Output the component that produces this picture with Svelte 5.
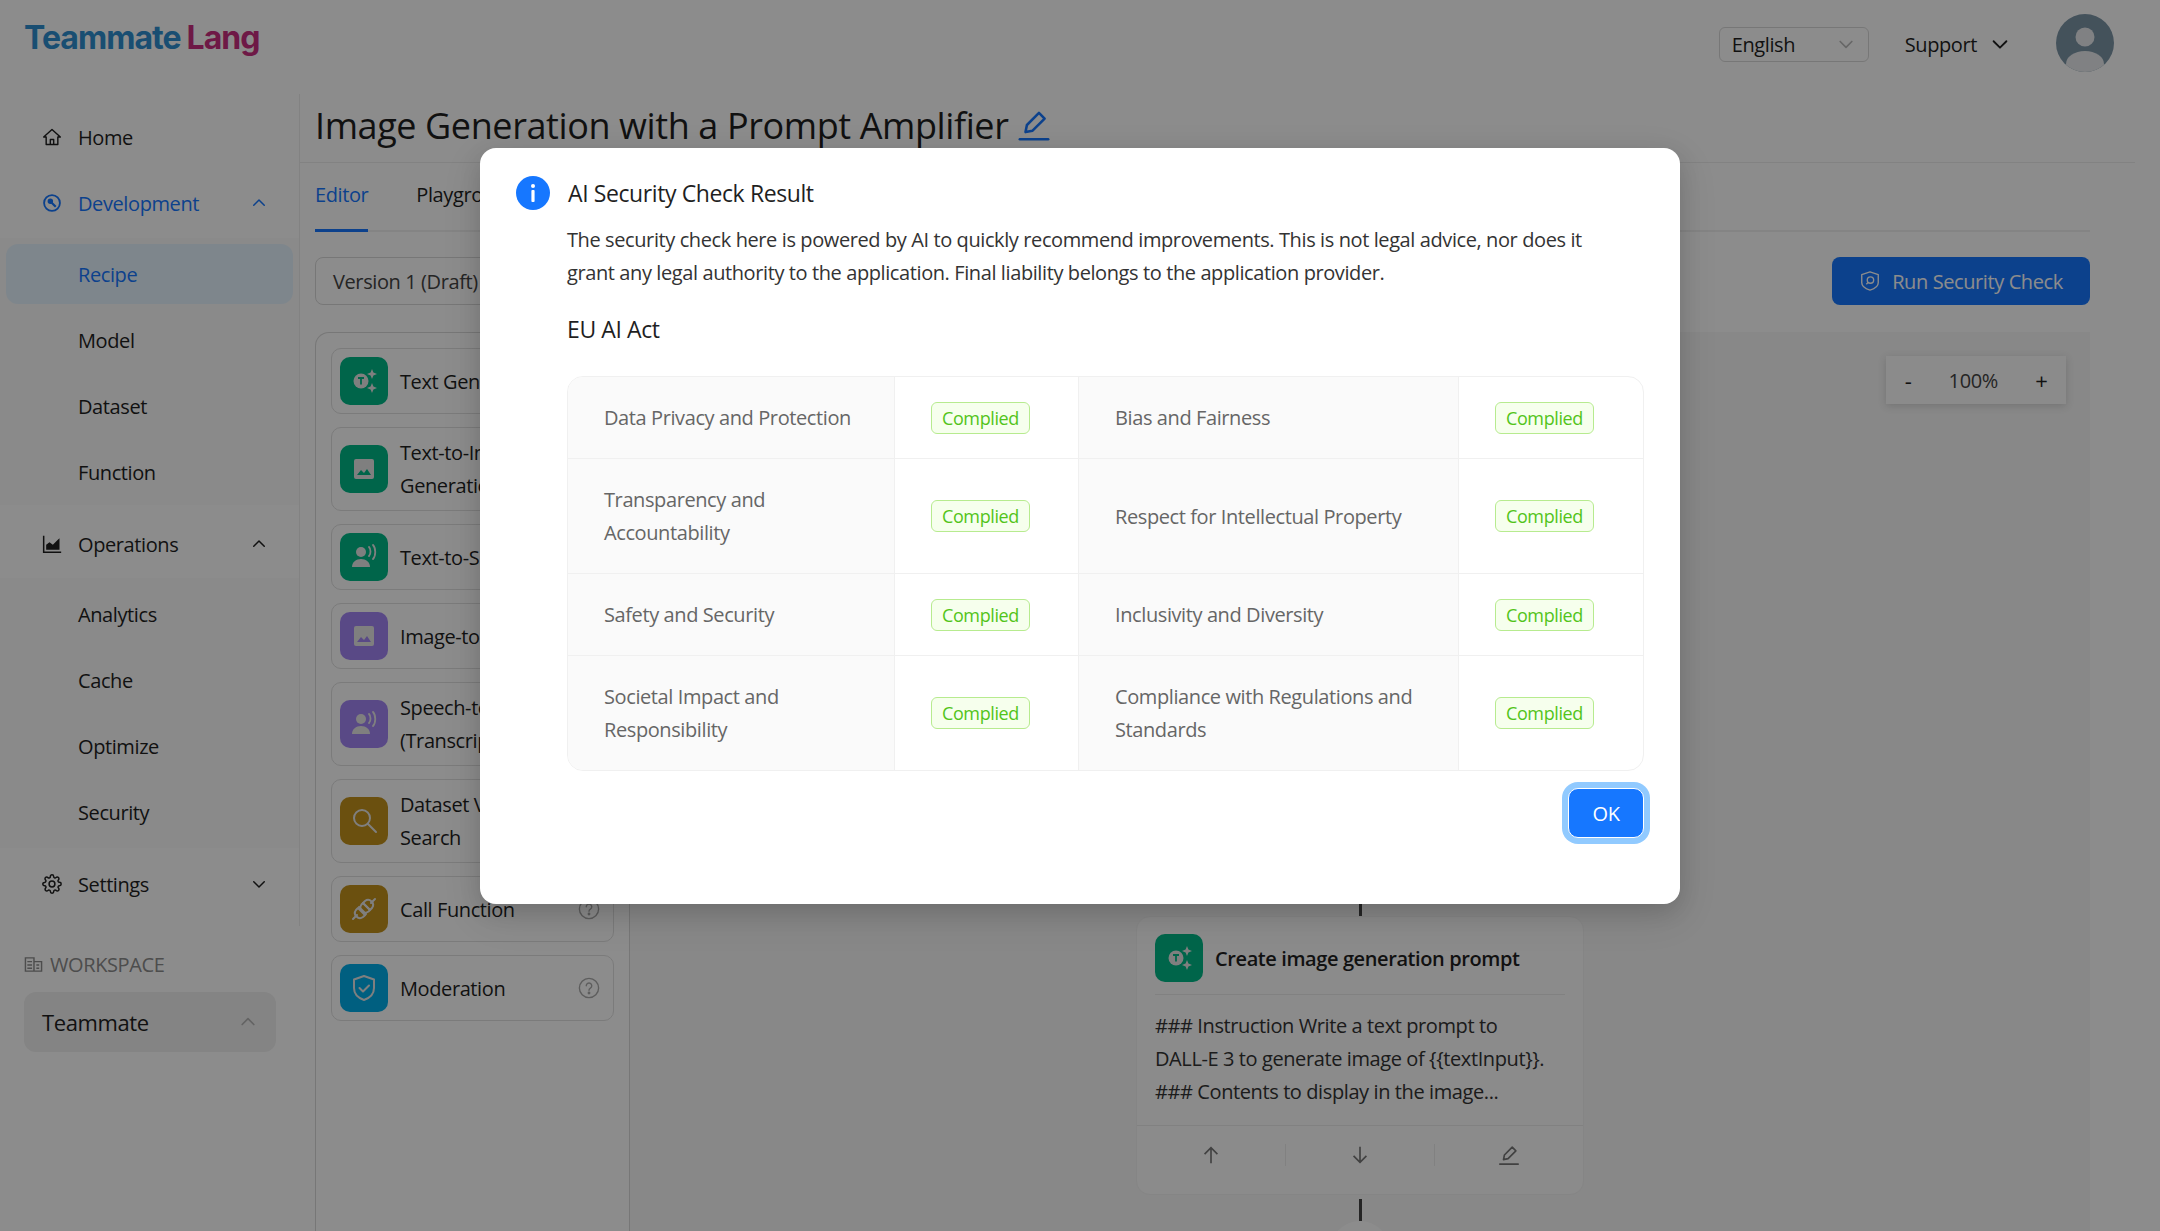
<script>
  const recipe = ['Recipe', 'Model', 'Dataset', 'Function'];
  const operations = ['Analytics', 'Cache', 'Optimize', 'Security'];

  const blocks = [
    { lines: ['Text Generation'], tone: 'green', icon: 'spark' },
    { lines: ['Text-to-Image', 'Generation'], tone: 'green', icon: 'image' },
    { lines: ['Text-to-Speech'], tone: 'green', icon: 'voice' },
    { lines: ['Image-to-Text'], tone: 'purple', icon: 'image' },
    { lines: ['Speech-to-Text', '(Transcription)'], tone: 'purple', icon: 'voice' },
    { lines: ['Dataset Vector', 'Search'], tone: 'amber', icon: 'search' },
    { lines: ['Call Function'], tone: 'amber', icon: 'plug' },
    { lines: ['Moderation'], tone: 'sky', icon: 'shield' }
  ];

  const checks = [
    ['Data Privacy and Protection', 'Bias and Fairness'],
    ['Transparency and Accountability', 'Respect for Intellectual Property'],
    ['Safety and Security', 'Inclusivity and Diversity'],
    ['Societal Impact and Responsibility', 'Compliance with Regulations and Standards']
  ];
</script>

{#snippet chevron(cls)}
  <svg class={cls} viewBox="0 0 24 24" fill="none" stroke="currentColor" stroke-width="2" stroke-linecap="round" stroke-linejoin="round"><path d="M5 9l7 7 7-7" /></svg>
{/snippet}

{#snippet pencil(cls)}
  <svg class={cls} viewBox="0 0 24 24" fill="none" stroke="currentColor" stroke-width="1.8" stroke-linejoin="round"><path d="M6 17l1-5L15.5 3.5l4 4L11 16z" /><path d="M2 22h20" stroke-linecap="round" /></svg>
{/snippet}

{#snippet blockIcon(name)}
  {#if name === 'spark'}
    <svg viewBox="0 0 32 32"><circle cx="13" cy="16" r="7.5" fill="#e8e8e8" /><path d="M10 13h6M13 13v6.5" stroke="currentColor" stroke-width="1.8" fill="none" /><path d="M24 4l1.4 3.6L29 9l-3.6 1.4L24 14l-1.4-3.6L19 9l3.6-1.4zM24 18l1.4 3.6L29 23l-3.6 1.4L24 28l-1.4-3.6L19 23l3.6-1.4z" fill="#e8e8e8" /></svg>
  {:else if name === 'image'}
    <svg viewBox="0 0 32 32"><rect x="6" y="6" width="20" height="20" rx="2" fill="#e8e8e8" /><path d="M9 22l4-5 3 3 3-4 4 6z" fill="currentColor" /></svg>
  {:else if name === 'voice'}
    <svg viewBox="0 0 32 32"><circle cx="13" cy="11" r="5" fill="#e8e8e8" /><path d="M4 26c0-5 4-8 9-8s9 3 9 8z" fill="#e8e8e8" /><path d="M21 6c2 2 2 7 0 9M25 4c3 3 3 11 0 14" stroke="#e8e8e8" stroke-width="1.8" fill="none" stroke-linecap="round" /></svg>
  {:else if name === 'search'}
    <svg viewBox="0 0 32 32" fill="none" stroke="#e8e8e8" stroke-width="2" stroke-linecap="round"><circle cx="14" cy="13" r="8" /><path d="M20 19l8 8" /></svg>
  {:else if name === 'plug'}
    <svg viewBox="0 0 32 32" fill="none" stroke="#e8e8e8" stroke-width="2" stroke-linecap="round" stroke-linejoin="round"><path d="M5 26l4-4M27 6l-4 4M15 10l7 7-1.5 1.5a5 5 0 0 1-7-7zM11 14l7 7-1.5 1.5" transform="rotate(0 16 16)" /><path d="M10 15l-2 2a5 5 0 0 0 7 7l2-2zM15 10l2-2a5 5 0 0 1 7 7l-2 2z" /></svg>
  {:else}
    <svg viewBox="0 0 32 32" fill="none" stroke="#e8e8e8" stroke-width="2" stroke-linecap="round" stroke-linejoin="round"><path d="M16 4l10 3.5V16c0 6-4.5 10-10 12-5.500-2-10-6-10-12V7.500z" /><path d="M11.500 16l3.500 3.500 6-6" /></svg>
  {/if}
{/snippet}

<div class="page">
  <header class="topbar">
    <div class="logo"><span class="logo-a">Teammate</span><span class="logo-b">Lang</span></div>
    <div class="top-actions">
      <div class="lang">
        <span>English</span>
        {@render chevron('lang-arrow')}
      </div>
      <div class="support">
        <span>Support</span>
        {@render chevron('support-arrow')}
      </div>
      <svg class="avatar" viewBox="0 0 58 58">
        <defs><clipPath id="av"><circle cx="29" cy="29" r="29" /></clipPath></defs>
        <g clip-path="url(#av)">
          <rect width="58" height="58" fill="#7c95a7" />
          <circle cx="29" cy="23" r="9.500" fill="#e9ecee" />
          <ellipse cx="29" cy="50" rx="19" ry="13" fill="#e9ecee" />
        </g>
      </svg>
    </div>
  </header>

  <div class="body">
    <aside class="side">
      <nav class="menu">
        <div class="item">
          <svg class="nav-icon" viewBox="0 0 24 24" fill="none" stroke="currentColor" stroke-width="1.7" stroke-linejoin="round"><path d="M2 12L12 3l10 9h-3v9H5v-9z" /><path d="M10 21v-6h4v6" /></svg>
          <span>Home</span>
        </div>
        <div class="item active">
          <svg class="nav-icon" viewBox="0 0 24 24" fill="none" stroke="currentColor" stroke-width="2.200"><circle cx="12" cy="12" r="9.500" /><circle cx="10" cy="10" r="2.200" fill="currentColor" /><path d="M11 11l5.500 5.500" stroke-width="2.600" /></svg>
          <span>Development</span>
          {@render chevron('caret up')}
        </div>
        <div class="sub first">
          {#each recipe as name, i}
            <div class="sub-item" class:selected={i === 0}>{name}</div>
          {/each}
        </div>
        <div class="item">
          <svg class="nav-icon" viewBox="0 0 24 24"><path d="M2 2v20h21" fill="none" stroke="currentColor" stroke-width="1.800" /><path d="M5 19v-6l4-3 4 3 6-6 2-2v14z" fill="currentColor" /></svg>
          <span>Operations</span>
          {@render chevron('caret up')}
        </div>
        <div class="sub">
          {#each operations as name}
            <div class="sub-item">{name}</div>
          {/each}
        </div>
        <div class="item">
          <svg class="nav-icon" viewBox="0 0 24 24" fill="none" stroke="currentColor" stroke-width="1.800"><circle cx="12" cy="12" r="3.500" /><path d="M19.400 15a1.650 1.650 0 0 0 .33 1.820l.06.06a2 2 0 0 1 0 2.830 2 2 0 0 1-2.830 0l-.06-.06a1.650 1.650 0 0 0-1.820-.33 1.650 1.650 0 0 0-1 1.510V21a2 2 0 0 1-2 2 2 2 0 0 1-2-2v-.09A1.650 1.650 0 0 0 9 19.400a1.650 1.650 0 0 0-1.820.33l-.06.06a2 2 0 0 1-2.830 0 2 2 0 0 1 0-2.830l.06-.06a1.650 1.650 0 0 0 .33-1.820 1.650 1.650 0 0 0-1.510-1H3a2 2 0 0 1-2-2 2 2 0 0 1 2-2h.09A1.650 1.650 0 0 0 4.600 9a1.650 1.650 0 0 0-.33-1.820l-.06-.06a2 2 0 0 1 0-2.830 2 2 0 0 1 2.830 0l.06.06a1.650 1.650 0 0 0 1.820.33H9a1.650 1.650 0 0 0 1-1.510V3a2 2 0 0 1 2-2 2 2 0 0 1 2 2v.09a1.650 1.650 0 0 0 1 1.510 1.650 1.650 0 0 0 1.820-.33l.06-.06a2 2 0 0 1 2.830 0 2 2 0 0 1 0 2.830l-.06.06a1.650 1.650 0 0 0-.33 1.820V9a1.650 1.650 0 0 0 1.510 1H21a2 2 0 0 1 2 2 2 2 0 0 1-2 2h-.09a1.650 1.650 0 0 0-1.510 1z" /></svg>
          <span>Settings</span>
          {@render chevron('caret')}
        </div>
      </nav>
      <div class="workspace">
        <div class="ws-label">
          <svg viewBox="0 0 20 20" fill="none" stroke="currentColor" stroke-width="1.500"><path d="M1.500 3h9v14h-9zM10.500 7h8v10h-8zM3.500 7h5M3.500 10.500h5M3.500 14h5M13 10.500h3M13 14h3" /></svg>
          <span>WORKSPACE</span>
        </div>
        <div class="ws-box">
          <span>Teammate</span>
          {@render chevron('ws-arrow up')}
        </div>
      </div>
    </aside>

    <main class="main">
      <div class="title-bar">
        <h1>Image Generation with a Prompt Amplifier</h1>
        {@render pencil('title-edit')}
      </div>
      <div class="tabs">
        <div class="tab on">Editor</div>
        <div class="tab">Playground</div>
      </div>
      <div class="toolbar">
        <div class="version">Version 1 (Draft)</div>
        <button class="run">
          <svg viewBox="0 0 24 24" fill="none" stroke="currentColor" stroke-width="1.500" stroke-linejoin="round"><path d="M12 2l9 3v9c0 4-4 6.500-9 8-5-1.500-9-4-9-8V5z" /><circle cx="12.500" cy="11" r="3.500" /><path d="M10 13.500l-2 2" /></svg>
          Run Security Check
        </button>
      </div>
      <div class="workarea">
        <div class="palette">
          {#each blocks as b}
            <div class="block">
              <div class="block-icon {b.tone}">{@render blockIcon(b.icon)}</div>
              <div class="block-text">
                {#each b.lines as line}
                  <div>{line}</div>
                {/each}
              </div>
              <svg class="help" viewBox="0 0 24 24" fill="none" stroke="currentColor" stroke-width="1.500"><circle cx="12" cy="12" r="10.500" /><path d="M9 9.500a3 3 0 1 1 4.500 2.600c-1 .6-1.500 1.100-1.500 2.400" stroke-linecap="round" /><circle cx="12" cy="17.500" r=".8" fill="currentColor" /></svg>
            </div>
          {/each}
        </div>
        <div class="canvas">
          <div class="zoom">
            <span class="zoom-btn">-</span>
            <span class="zoom-val">100%</span>
            <span class="zoom-btn">+</span>
          </div>
          <div class="link link-top"></div>
          <div class="node">
            <div class="node-head">
              <div class="block-icon green">{@render blockIcon('spark')}</div>
              <div class="node-title">Create image generation prompt</div>
            </div>
            <div class="node-body">### Instruction Write a text prompt to<br />DALL-E 3 to generate image of {'{{textInput}}'}.<br />### Contents to display in the image...</div>
            <div class="node-foot">
              <div class="foot-cell">
                <svg viewBox="0 0 24 24" fill="none" stroke="currentColor" stroke-width="1.800"><path d="M12 21V4M5 11l7-7 7 7" /></svg>
              </div>
              <div class="foot-cell">
                <svg viewBox="0 0 24 24" fill="none" stroke="currentColor" stroke-width="1.800"><path d="M12 3v17M5 13l7 7 7-7" /></svg>
              </div>
              <div class="foot-cell">{@render pencil('')}</div>
            </div>
          </div>
          <div class="link link-bottom"></div>
          <div class="node-dot"></div>
        </div>
      </div>
    </main>
  </div>

  <div class="overlay">
    <section class="modal">
      <div class="modal-head">
        <svg class="info" viewBox="0 0 34 34"><circle cx="17" cy="17" r="17" fill="#1677ff" /><circle cx="17" cy="10" r="2" fill="#fff" /><rect x="15.400" y="14" width="3.200" height="12" rx="1" fill="#fff" /></svg>
        <h2>AI Security Check Result</h2>
      </div>
      <div class="modal-body">
        <p>The security check here is powered by AI to quickly recommend improvements. This is not legal advice, nor does it grant any legal authority to the application. Final liability belongs to the application provider.</p>
        <h3>EU AI Act</h3>
        <div class="result">
          {#each checks as row}
            {#each row as label}
              <div class="label">{label}</div>
              <div class="value"><span class="tag">Complied</span></div>
            {/each}
          {/each}
        </div>
        <div class="modal-foot"><button class="ok">OK</button></div>
      </div>
    </section>
  </div>
</div>

<style>
  :global(body) {
    margin: 0;
    background: #fff;
  }

  .page {
    position: relative;
    width: 2160px;
    height: 1231px;
    overflow: hidden;
    font-family: "Open Sans", "Noto Sans", sans-serif;
    font-size: 20px;
    letter-spacing: -0.02em;
    color: #1f1f1f;
  }

  .topbar {
    height: 88px;
    display: flex;
    align-items: center;
    justify-content: space-between;
    padding: 0 46px 0 24px;
    box-sizing: border-box;
  }

  .logo {
    display: flex;
    gap: 6px;
    font-family: Inter, sans-serif;
    font-weight: 700;
    font-size: 32px;
    letter-spacing: -0.03em;
    margin-top: -14px;
  }
  .logo-a { color: #2f8fd0; }
  .logo-b { color: #c92f80; }

  .top-actions {
    display: flex;
    align-items: center;
  }

  .lang {
    width: 150px;
    height: 35px;
    box-sizing: border-box;
    border: 1px solid #d9d9d9;
    border-radius: 6px;
    padding: 0 12px;
    display: flex;
    align-items: center;
    justify-content: space-between;
  }
  .lang-arrow {
    width: 20px;
    height: 20px;
    color: #bbb;
  }

  .support {
    display: flex;
    align-items: center;
    gap: 12px;
    margin: 0 45px 0 36px;
  }
  .support-arrow {
    width: 22px;
    height: 22px;
  }

  .avatar {
    width: 58px;
    height: 58px;
    margin-top: -2px;
  }

  .body {
    display: flex;
    height: 1143px;
  }

  .side {
    width: 300px;
    flex: none;
    display: flex;
    flex-direction: column;
  }

  .menu {
    height: 832px;
    padding-top: 13px;
    box-sizing: border-box;
    border-right: 1px solid #ededed;
    margin-top: 6px;
  }

  .item {
    height: 60px;
    margin-bottom: 6px;
    padding-left: 42px;
    display: flex;
    align-items: center;
    position: relative;
  }
  .item.active {
    color: #1677ff;
  }
  .nav-icon {
    width: 20px;
    height: 20px;
    margin-right: 16px;
    flex: none;
  }
  .caret {
    position: absolute;
    right: 31px;
    top: 21px;
    width: 18px;
    height: 18px;
  }
  .up {
    transform: rotate(180deg);
  }

  .sub {
    background: #fbfbfb;
    padding: 6px 0 6px;
    margin-bottom: 6px;
    margin-top: -2px;
  }
  .sub.first {
    margin-top: -1px;
    padding-top: 6px;
    padding-bottom: 3px;
    margin-bottom: 9px;
  }
  .sub-item {
    height: 60px;
    margin: 0 6px 6px;
    padding-left: 72px;
    display: flex;
    align-items: center;
    border-radius: 12px;
  }
  .sub-item:last-child {
    margin-bottom: 0;
  }
  .sub-item.selected {
    background: #e6f4ff;
    color: #1677ff;
  }

  .workspace {
    padding: 0 24px;
    margin-top: 25px;
  }
  .ws-label {
    display: flex;
    align-items: center;
    gap: 7px;
    color: #8c8c8c;
    font-weight: 500;
    margin-bottom: 14px;
  }
  .ws-label svg {
    width: 19px;
    height: 19px;
  }
  .ws-box {
    width: 252px;
    height: 60px;
    box-sizing: border-box;
    background: #f0f0f0;
    border-radius: 12px;
    padding: 0 18px;
    display: flex;
    align-items: center;
    justify-content: space-between;
    font-size: 22px;
  }
  .ws-arrow {
    width: 20px;
    height: 20px;
    color: #b5b5b5;
  }

  .main {
    flex: 1;
    margin-right: 25px;
    min-width: 0;
  }

  .title-bar {
    height: 75px;
    box-sizing: border-box;
    border-bottom: 1px solid #ededed;
    padding-left: 15px;
    display: flex;
    align-items: center;
    gap: 8px;
  }
  h1 {
    margin: 0;
    font-size: 36px;
    font-weight: 500;
  }
  .title-edit {
    width: 34px;
    height: 34px;
    color: #1677ff;
  }

  .tabs {
    margin: 0 45px 0 15px;
    height: 69px;
    box-sizing: border-box;
    border-bottom: 2px solid #f0f0f0;
    display: flex;
    gap: 48px;
  }
  .tab {
    padding-top: 18px;
    height: 69px;
    box-sizing: border-box;
  }
  .tab.on {
    color: #1677ff;
    font-weight: 500;
    border-bottom: 3px solid #1677ff;
  }

  .toolbar {
    margin: 25px 45px 27px 15px;
    display: flex;
    justify-content: space-between;
  }
  .version {
    width: 260px;
    height: 48px;
    box-sizing: border-box;
    border: 1px solid #d9d9d9;
    border-radius: 8px;
    padding-left: 17px;
    display: flex;
    align-items: center;
    color: #444;
  }
  .run {
    width: 258px;
    height: 48px;
    border: 0;
    border-radius: 8px;
    background: #1677ff;
    color: #fff;
    font: inherit;
    letter-spacing: inherit;
    display: flex;
    align-items: center;
    justify-content: center;
    gap: 11px;
  }
  .run svg {
    width: 22px;
    height: 22px;
  }

  .workarea {
    margin: 0 45px 0 15px;
    display: flex;
    height: 899px;
  }

  .palette {
    width: 315px;
    flex: none;
    box-sizing: border-box;
    border: 1px solid #d9d9d9;
    border-bottom: 0;
    border-radius: 14px 14px 0 0;
    padding: 15px;
    display: flex;
    flex-direction: column;
    gap: 13px;
  }

  .block {
    border: 1px solid #e0e0e0;
    border-radius: 10px;
    padding: 8px;
    display: flex;
    align-items: center;
    gap: 12px;
    line-height: 33px;
  }
  .block-text {
    flex: 1;
    white-space: nowrap;
  }
  .help {
    width: 22px;
    height: 22px;
    color: #aaa;
    margin-right: 5px;
  }

  .block-icon {
    width: 48px;
    height: 48px;
    flex: none;
    border-radius: 10px;
    display: flex;
    align-items: center;
    justify-content: center;
  }
  .block-icon svg {
    width: 32px;
    height: 32px;
  }
  .green { background: #00b887; color: #00b887; }
  .purple { background: #a386f5; color: #a386f5; }
  .amber { background: #c3921c; color: #c3921c; }
  .sky { background: #00aeea; color: #00aeea; }

  .canvas {
    flex: 1;
    position: relative;
    background: #f7f7f7;
  }

  .zoom {
    position: absolute;
    top: 24px;
    right: 24px;
    width: 180px;
    height: 48px;
    background: #fdfdfd;
    box-shadow: 0 2px 8px rgba(0, 0, 0, 0.15);
    display: flex;
    align-items: center;
    justify-content: space-around;
  }
  .zoom-btn {
    font-size: 22px;
  }
  .zoom-val {
    color: #444;
  }

  .link {
    position: absolute;
    left: 729px;
    width: 3px;
    background: #444;
  }
  .link-top {
    top: 560px;
    height: 24px;
  }
  .link-bottom {
    top: 867px;
    height: 22px;
  }
  .node-dot {
    position: absolute;
    left: 700px;
    top: 889px;
    width: 60px;
    height: 60px;
    border-radius: 50%;
    background: #fff;
  }

  .node {
    position: absolute;
    left: 506px;
    top: 584px;
    width: 448px;
    height: 279px;
    box-sizing: border-box;
    background: #fdfdfd;
    border-radius: 14px;
    border: 1px solid #f3f3f3;
  }
  .node-head {
    margin: 17px 18px 0;
    padding-bottom: 12px;
    display: flex;
    align-items: center;
    gap: 12px;
    border-bottom: 1px solid #ececec;
  }
  .node-title {
    font-weight: 600;
  }
  .node-body {
    padding: 14px 18px 17px;
    line-height: 33px;
    color: #333;
    white-space: nowrap;
  }
  .node-foot {
    border-top: 1px solid #ececec;
    display: flex;
    padding-top: 18px;
  }
  .foot-cell {
    flex: 1;
    display: flex;
    justify-content: center;
    color: #777;
    border-right: 1px solid #ececec;
  }
  .foot-cell:last-child {
    border-right: 0;
  }
  .foot-cell svg,
  .foot-cell :global(svg) {
    width: 22px;
    height: 22px;
  }

  .overlay {
    position: absolute;
    inset: 0;
    background: rgba(0, 0, 0, 0.45);
    display: flex;
    justify-content: center;
    align-items: flex-start;
  }

  .modal {
    margin-top: 148px;
    width: 1200px;
    height: 756px;
    box-sizing: border-box;
    background: #fff;
    border-radius: 16px;
    padding: 28px 36px 0;
    box-shadow: 0 8px 22px rgba(0, 0, 0, 0.12), 0 12px 40px rgba(0, 0, 0, 0.1);
  }

  .modal-head {
    display: flex;
    align-items: center;
    gap: 18px;
  }
  .info {
    width: 34px;
    height: 34px;
  }
  h2 {
    margin: 0;
    font-size: 23px;
    font-weight: 500;
  }

  .modal-body {
    margin-left: 51px;
  }
  p {
    margin: 13px 0 0;
    line-height: 33px;
    color: #333;
    width: 1065px;
  }
  h3 {
    margin: 24px 0 0;
    font-size: 23px;
    font-weight: 500;
    line-height: 33px;
  }

  .result {
    margin-top: 30px;
    width: 1077px;
    box-sizing: border-box;
    border: 1px solid #f0f0f0;
    border-radius: 16px;
    overflow: hidden;
    display: grid;
    grid-template-columns: 327px 184px 380px 1fr;
    color: #666;
  }
  .label,
  .value {
    padding: 24px 36px;
    line-height: 33px;
    border-bottom: 1px solid #f0f0f0;
    border-right: 1px solid #f0f0f0;
    display: flex;
    align-items: center;
  }
  .label {
    background: #fafafa;
  }
  .value:nth-child(4n) {
    border-right: 0;
  }
  .label:nth-last-child(-n+4),
  .value:nth-last-child(-n+4) {
    border-bottom: 0;
  }

  .tag {
    height: 32px;
    box-sizing: border-box;
    padding: 0 10px;
    display: flex;
    align-items: center;
    border: 1px solid #b7eb8f;
    border-radius: 6px;
    background: #f6ffed;
    color: #52c41a;
    font-size: 18px;
    line-height: 1;
  }

  .modal-foot {
    display: flex;
    justify-content: flex-end;
    margin-top: 17px;
  }
  .ok {
    width: 76px;
    height: 50px;
    border: 1px solid #fff;
    border-radius: 10px;
    background: #1677ff;
    color: #fff;
    font: inherit;
    letter-spacing: inherit;
    box-shadow: 0 0 0 6px #91caff;
  }
</style>
